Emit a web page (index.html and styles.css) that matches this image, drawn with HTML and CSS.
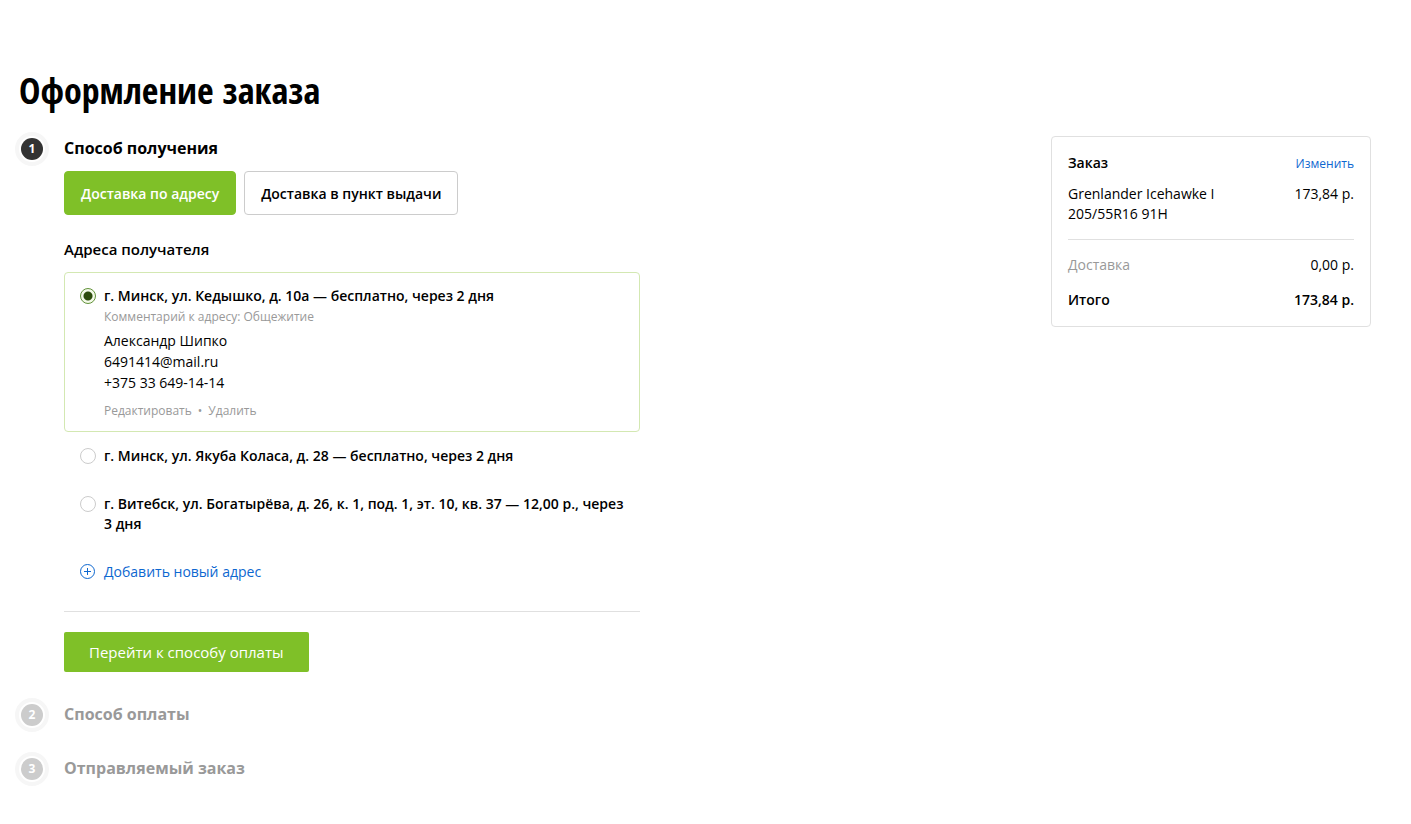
FILE: index.html
```html
<!DOCTYPE html>
<html lang="ru">
<head>
<meta charset="utf-8">
<meta name="viewport" content="width=device-width, initial-scale=1">
<title>Оформление заказа</title>
<link rel="stylesheet" href="styles.css">
</head>
<body>
<main class="page">
  <h1 class="page-title">Оформление заказа</h1>
  <div class="checkout">
    <ol class="steps">
      <li class="step">
        <span class="step-number step-number-active">1</span>
        <section class="step-body">
          <h2 class="step-title">Способ получения</h2>
          <div class="tabs">
            <button type="button" class="tab tab-active">Доставка по адресу</button>
            <button type="button" class="tab">Доставка в пункт выдачи</button>
          </div>
          <h3 class="addresses-title">Адреса получателя</h3>
          <div class="addresses">
            <div class="address address-selected">
              <input class="radio" type="radio" name="address" id="address-1" checked>
              <div class="address-info">
                <label class="address-label" for="address-1">г. Минск, ул. Кедышко, д. 10а — бесплатно, через 2 дня</label>
                <p class="address-comment">Комментарий к адресу: Общежитие</p>
                <p class="contact">Александр Шипко<br>6491414@mail.ru<br>+375 33 649-14-14</p>
                <div class="address-actions">
                  <a class="action" href="#">Редактировать</a><span>•</span><a class="action" href="#">Удалить</a>
                </div>
              </div>
            </div>
            <div class="address">
              <input class="radio" type="radio" name="address" id="address-2">
              <label class="address-label" for="address-2">г. Минск, ул. Якуба Коласа, д. 28 — бесплатно, через 2 дня</label>
            </div>
            <div class="address">
              <input class="radio" type="radio" name="address" id="address-3">
              <label class="address-label" for="address-3">г. Витебск, ул. Богатырёва, д. 26, к. 1, под. 1, эт. 10, кв. 37 — 12,00 р., через 3 дня</label>
            </div>
            <a class="add-address" href="#">
              <svg class="add-icon" viewBox="0 0 16 16" aria-hidden="true"><circle cx="7.5" cy="7.5" r="7"/><path d="M7.5 4v7M4 7.5h7"/></svg>
              Добавить новый адрес
            </a>
          </div>
          <div class="step-footer">
            <button type="button" class="submit">Перейти к способу оплаты</button>
          </div>
        </section>
      </li>
      <li class="step">
        <span class="step-number">2</span>
        <h2 class="step-title step-title-muted">Способ оплаты</h2>
      </li>
      <li class="step">
        <span class="step-number">3</span>
        <h2 class="step-title step-title-muted">Отправляемый заказ</h2>
      </li>
    </ol>
    <aside class="summary">
      <div class="summary-row summary-head">
        <h2 class="summary-title">Заказ</h2>
        <a class="summary-edit" href="#">Изменить</a>
      </div>
      <div class="summary-row summary-item">
        <span class="summary-name">Grenlander Icehawke I 205/55R16 91H</span>
        <span>173,84 р.</span>
      </div>
      <div class="summary-row summary-delivery">
        <span class="summary-muted">Доставка</span>
        <span>0,00 р.</span>
      </div>
      <div class="summary-row summary-total">
        <span>Итого</span>
        <span>173,84 р.</span>
      </div>
    </aside>
  </div>
</main>
</body>
</html>
```
FILE: styles.css
```css
* {
  box-sizing: border-box;
}

body {
  margin: 0;
  background: #fff;
  color: #000;
  font: 400 14px/20px "Open Sans", "Noto Sans", sans-serif;
}

h1, h2, h3, p, ol {
  margin: 0;
  padding: 0;
}

a {
  color: #0d67d0;
  text-decoration: none;
}

button {
  font-family: inherit;
  cursor: pointer;
}

.page {
  padding: 67px 40px 24px 15px;
}

.page-title {
  padding-left: 4px;
  font: 700 36px/48px "Open Sans Condensed", "Liberation Sans Narrow", "Roboto Condensed", "Open Sans", sans-serif;
}

.checkout {
  display: flex;
  justify-content: space-between;
  align-items: flex-start;
  gap: 40px;
  padding-top: 17px;
}

.steps {
  display: grid;
  flex: 0 1 625px;
  gap: 20px;
  list-style: none;
}

.step {
  display: flex;
  align-items: flex-start;
  gap: 15px;
}

.step-number {
  flex: none;
  width: 34px;
  height: 34px;
  border: 4px solid #f6f6f6;
  border-radius: 50%;
  padding: 2px;
  background: #ccc content-box;
  color: #fff;
  font-size: 12px;
  font-weight: 700;
  line-height: 22px;
  text-align: center;
}

.step-number-active {
  background-color: #333;
}

.step-body {
  flex: 1;
  min-width: 0;
}

.step-title {
  padding: 4px 0;
  font-size: 16px;
  font-weight: 700;
  line-height: 24px;
}

.step-title-muted {
  color: #999;
}

.tabs {
  display: flex;
  gap: 8px;
  padding-top: 7px;
}

.tab {
  height: 44px;
  padding: 0 16px;
  border: 1px solid #ccc;
  border-radius: 4px;
  background: #fff;
  color: #000;
  font-size: 14px;
  font-weight: 600;
}

.tab-active {
  border-color: #7fc028;
  background: #7fc028;
  color: #fff;
}

.addresses-title {
  padding: 24px 0 13px;
  font-size: 15px;
  font-weight: 600;
  line-height: 20px;
}

.address {
  display: flex;
  gap: 8px;
  padding: 13px 15px;
  border: 1px solid transparent;
  border-radius: 4px;
}

.address-selected {
  padding-bottom: 10px;
  border-color: #d3e8b2;
}

.radio {
  flex: none;
  appearance: none;
  width: 16px;
  height: 16px;
  margin: 2px 0;
  border: 1px solid #ccc;
  border-radius: 50%;
  background: #fff;
}

.radio:checked {
  border-color: #62923a;
  background: radial-gradient(circle, #2c4c0c 4px, #f3fae8 5px);
}

.address-label {
  display: block;
  font-weight: 600;
}

.address-comment {
  padding-top: 1px;
  color: #999;
  font-size: 12px;
}

.contact {
  padding-top: 3px;
  line-height: 21px;
}

.address-actions {
  display: flex;
  gap: 6px;
  padding-top: 8px;
  color: #999;
  font-size: 12px;
}

.action {
  color: inherit;
}

.add-address {
  display: flex;
  align-items: center;
  gap: 8px;
  padding: 14px 16px;
}

.add-icon {
  width: 16px;
  height: 16px;
  fill: none;
  stroke: #0d67d0;
}

.step-footer {
  margin-top: 15px;
  padding: 20px 0 6px;
  border-top: 1px solid #e0e0e0;
}

.submit {
  height: 40px;
  padding: 0 25px;
  border: 0;
  border-radius: 2px;
  background: #7fc028;
  color: #fff;
  font-size: 15px;
  font-weight: 400;
}

.summary {
  flex: 0 0 320px;
  margin-top: 4px;
  padding: 16px;
  border: 1px solid #e0e0e0;
  border-radius: 4px;
}

.summary-row {
  display: flex;
  justify-content: space-between;
  gap: 16px;
}

.summary-head {
  align-items: baseline;
}

.summary-title {
  font-size: 14px;
  font-weight: 600;
  line-height: 20px;
}

.summary-edit {
  font-size: 12px;
  line-height: 16px;
}

.summary-item {
  padding: 11px 0 15px;
  border-bottom: 1px solid #e0e0e0;
}

.summary-name {
  flex: 0 1 160px;
}

.summary-delivery {
  padding: 15px 0;
}

.summary-muted {
  color: #999;
}

.summary-total {
  font-weight: 600;
}
```
